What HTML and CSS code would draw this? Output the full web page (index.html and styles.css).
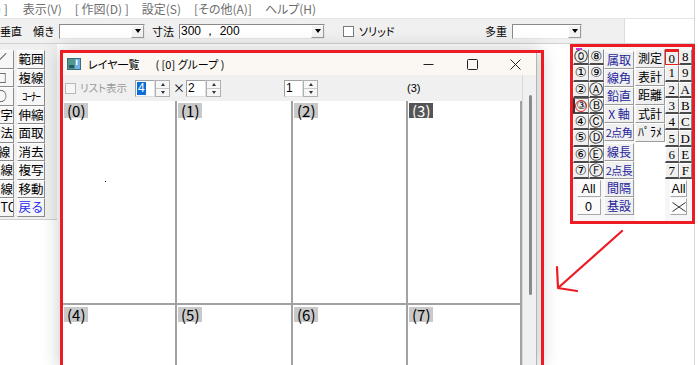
FILE: index.html
```html
<!DOCTYPE html>
<html lang="ja">
<head>
<meta charset="utf-8">
<title>レイヤ一覧</title>
<link rel="stylesheet" href="styles.css">
</head>
<body>
<div class="app">
  <div class="menubar">
    <span class="mi first">) ]</span>
    <span class="mi">表示(V)</span>
    <span class="mi">[ 作図(D) ]</span>
    <span class="mi">設定(S)</span>
    <span class="mi">[その他(A)]</span>
    <span class="mi">ヘルプ(H)</span>
  </div>
  <div class="toolbar">
    <div class="tbar">
      <span class="tl">垂直</span>
      <span class="tl l-kata">傾き</span>
      <span class="combo c-kata"><span class="cval"></span><span class="dd"><i></i></span></span>
      <span class="tl l-sun">寸法</span>
      <span class="combo c-sun"><span class="cval">300 ， 200</span><span class="dd"><i></i></span></span>
      <span class="chk"></span>
      <span class="tl l-sol">ソリッド</span>
      <span class="tl l-ta">多重</span>
      <span class="combo c-ta"><span class="cval"></span><span class="dd"><i></i></span></span>
    </div>
  </div>
  <div class="workspace">
    <div class="toolpanel">
      <div class="tcol c1">
        <span class="tbtn">／</span><span class="tbtn">□</span><span class="tbtn">○</span>
        <span class="tbtn">文字</span><span class="tbtn">寸法</span><span class="tbtn">2線</span>
        <span class="tbtn">連線</span><span class="tbtn">中線</span><span class="tbtn">AUTO</span>
      </div>
      <div class="tcol c2">
        <span class="tbtn">範囲</span><span class="tbtn">複線</span><span class="tbtn narrow">ｺｰﾅｰ</span>
        <span class="tbtn">伸縮</span><span class="tbtn">面取</span><span class="tbtn">消去</span>
        <span class="tbtn">複写</span><span class="tbtn">移動</span><span class="tbtn undo">戻る</span>
      </div>
    </div>
    <div class="canvas"></div>
  </div>
</div>

<div class="dialog">
  <div class="titlebar">
    <svg class="appicon" width="14" height="12" viewBox="0 0 14 12">
      <rect x="0" y="0" width="14" height="12" fill="#3c6e78"/>
      <rect x="1" y="1" width="7" height="10" fill="#4f9a8c"/>
      <rect x="8" y="1" width="5" height="10" fill="#6fb1e0"/>
      <rect x="9" y="2" width="1.5" height="5" fill="#ffffff"/>
      <rect x="2" y="7" width="5" height="3" fill="#2b5560"/>
    </svg>
    <span class="title">レイヤ一覧</span>
    <span class="title t2">( [0] グループ )</span>
    <div class="winctl">
      <span class="wbtn"><svg width="11" height="11" viewBox="0 0 11 11"><path d="M0.5 5.5H10.5" stroke="#222" stroke-width="1"/></svg></span>
      <span class="wbtn"><svg width="11" height="11" viewBox="0 0 11 11"><rect x="0.5" y="0.5" width="10" height="10" rx="1" fill="none" stroke="#222" stroke-width="1"/></svg></span>
      <span class="wbtn close"><svg width="11" height="11" viewBox="0 0 11 11"><path d="M0.5 0.5L10.5 10.5M10.5 0.5L0.5 10.5" stroke="#222" stroke-width="1"/></svg></span>
    </div>
  </div>
  <div class="dbody">
    <div class="dmain">
      <div class="dtools">
        <span class="dchk"></span>
        <span class="dlabel">リスト表示</span>
        <span class="spin s1"><span class="sval"><span class="sel">4</span></span><span class="sbtns"><span class="sb"><i class="up"></i></span><span class="sb"><i class="dn"></i></span></span></span>
        <span class="times">×</span>
        <span class="spin s2"><span class="sval">2</span><span class="sbtns"><span class="sb"><i class="up"></i></span><span class="sb"><i class="dn"></i></span></span></span>
        <span class="spin s3"><span class="sval">1</span><span class="sbtns"><span class="sb"><i class="up"></i></span><span class="sb"><i class="dn"></i></span></span></span>
        <span class="cur">(3)</span>
      </div>
      <div class="grid">
        <div class="cell top"><span class="lbl">(0)</span><span class="dot"></span></div>
        <div class="cell top"><span class="lbl">(1)</span></div>
        <div class="cell top"><span class="lbl">(2)</span></div>
        <div class="cell top"><span class="lbl on">(3)</span></div>
        <div class="cell"><span class="lbl">(4)</span></div>
        <div class="cell"><span class="lbl">(5)</span></div>
        <div class="cell"><span class="lbl">(6)</span></div>
        <div class="cell"><span class="lbl">(7)</span></div>
      </div>
    </div>
    <div class="vscroll"><div class="thumb"></div></div>
  </div>
</div>

<div class="palette">
  <div class="pcol ab">
    <div class="cgrid">
      <span class="cb first0"><i class="mag"></i>⓪</span><span class="cb">⑧</span>
      <span class="cb">①</span><span class="cb">⑨</span>
      <span class="cb">②</span><span class="cb">Ⓐ</span>
      <span class="cb pressed"><span class="ring">③</span></span><span class="cb">Ⓑ</span>
      <span class="cb">④</span><span class="cb">Ⓒ</span>
      <span class="cb">⑤</span><span class="cb">Ⓓ</span>
      <span class="cb">⑥</span><span class="cb">Ⓔ</span>
      <span class="cb">⑦</span><span class="cb">Ⓕ</span>
    </div>
    <span class="wbtn2">All</span>
    <span class="wbtn2">0</span>
  </div>
  <div class="pcol c">
    <span class="bb">属取</span><span class="bb">線角</span><span class="bb">鉛直</span><span class="bb">X 軸</span><span class="bb sm">2点角</span>
    <span class="bb gap">線長</span><span class="bb sm">2点長</span><span class="bb">間隔</span><span class="bb">基設</span>
  </div>
  <div class="pcol d">
    <span class="mb">測定</span><span class="mb">表計</span><span class="mb">距離</span><span class="mb">式計</span><span class="mb">ﾊﾟﾗﾒ</span>
    <span class="blank"></span>
  </div>
  <div class="pcol ef">
    <div class="sgrid">
      <span class="sq cur0">0</span><span class="sq">8</span>
      <span class="sq">1</span><span class="sq">9</span>
      <span class="sq">2</span><span class="sq">A</span>
      <span class="sq">3</span><span class="sq">B</span>
      <span class="sq">4</span><span class="sq">C</span>
      <span class="sq">5</span><span class="sq">D</span>
      <span class="sq">6</span><span class="sq">E</span>
      <span class="sq">7</span><span class="sq">F</span>
    </div>
    <span class="wbtn3">All</span>
    <span class="wbtn3"><svg width="14" height="10" viewBox="0 0 14 10"><path d="M0.5 0.5L7 5L0.5 9.5M13.5 0.5L7 5L13.5 9.5" fill="none" stroke="#333" stroke-width="1"/></svg></span>
  </div>
</div>

<div class="mark mark-dialog"></div>
<div class="mark mark-palette"></div>
<svg class="arrow" width="698" height="365" viewBox="0 0 698 365">
  <path d="M622 231L558 288M557 267L558 288L577 291" fill="none" stroke="#ed1c24" stroke-width="2.2" stroke-linecap="round" stroke-linejoin="round"/>
</svg>
</body>
</html>
```
FILE: styles.css
```css
* { box-sizing: border-box; margin: 0; padding: 0; }
html, body { width: 698px; height: 365px; overflow: hidden; background: #fff; }
body {
  position: relative;
  font-family: "Noto Sans CJK JP", "Noto Sans", sans-serif;
  font-size: 12px;
  color: #000;
  line-height: 1;
}

.app {
  width: 695px;
  height: 365px;
  border-right: 1px solid #d6d6d6;
  display: flex;
  flex-direction: column;
}

/* menu */
.menubar {
  height: 19px;
  display: flex;
  align-items: center;
  gap: 13px;
  color: #6e6e6e;
  font-size: 12px;
  font-feature-settings: "palt";
  white-space: nowrap;
  border-bottom: 1px solid #e4e4e4;
}
.menubar .first { margin-left: -3px; margin-right: 2px; }

/* toolbar */
.toolbar {
  height: 25px;
  display: flex;
  border-bottom: 1px solid #d2d2d2;
}
.tbar {
  width: 625px;
  background: #f0f0f0;
  border-right: 1px solid #dcdcdc;
  display: flex;
  align-items: center;
  font-size: 11px;
  white-space: nowrap;
}
.tl { display: inline-block; }
.l-kata { margin-left: 11px; }
.l-sun { margin-left: 7px; }
.l-sol { margin-left: 5px; width: 36px; font-feature-settings: "palt"; }
.l-ta { margin-left: 90px; }
.combo {
  height: 15px;
  margin-left: 4px;
  display: flex;
  background: #fff;
  border: 1px solid;
  border-color: #8a8a8a #e6e6e6 #e6e6e6 #8a8a8a;
}
.c-kata { width: 86px; }
.c-sun { width: 146px; margin-left: 5px; }
.c-ta { width: 70px; margin-left: 5px; }
.cval {
  flex: 1;
  font-family: "Liberation Sans", sans-serif;
  font-size: 12px;
  line-height: 13px;
  padding-left: 1px;
}
.dd {
  width: 13px;
  height: 13px;
  border: 1px solid;
  border-color: #fff #9a9a9a #9a9a9a #fff;
  background: #f3f3f3;
  display: flex;
  align-items: center;
  justify-content: center;
}
.dd i {
  width: 0; height: 0;
  border-left: 3.5px solid transparent;
  border-right: 3.5px solid transparent;
  border-top: 4px solid #000;
}
.chk {
  width: 11px;
  height: 11px;
  margin-left: 18px;
  background: #fff;
  border: 1px solid #7a7a7a;
}

/* workspace */
.workspace {
  flex: 1;
  display: flex;
  align-items: flex-start;
}
.toolpanel {
  width: 57px;
  height: 176px;
  background: #f0f0f0;
  border-bottom: 1px solid #cfcfcf;
  display: flex;
  gap: 3px;
  padding-top: 6px;
}
.tcol { display: flex; flex-direction: column; }
.tcol.c1 { margin-left: -13px; }
.c1 .tbtn { width: 27px; }
.tbtn {
  width: 28px;
  height: 18.5px;
  display: flex;
  align-items: center;
  justify-content: center;
  font-size: 12.5px;
  background: #f7f7f7;
  border: 1px solid;
  border-color: #ffffff #8c8c8c #8c8c8c #ffffff;
  white-space: nowrap;
  overflow: hidden;
}
.tbtn.narrow { font-size: 11px; letter-spacing: -1px; }
.tbtn.undo { color: #2a2af0; }
.canvas { flex: 1; }

/* dialog window */
.dialog {
  position: absolute;
  left: 63px;
  top: 53px;
  width: 474px;
  height: 312px;
  overflow: hidden;
  background: #f0f0f0;
  border-right: 1px solid #b4b4b4;
  box-shadow: 0 0 18px 3px rgba(0, 0, 0, 0.22);
  display: flex;
  flex-direction: column;
}
.titlebar {
  height: 22px;
  flex: none;
  background: #fbf7f2;
  display: flex;
  align-items: center;
  padding-left: 4px;
  font-size: 11px;
  font-feature-settings: "palt";
}
.appicon { margin-right: 7px; flex: none; }
.title.t2 { margin-left: 16px; }
.winctl { margin-left: auto; display: flex; height: 22px; }
.wbtn {
  width: 44px;
  height: 22px;
  display: flex;
  align-items: center;
  justify-content: center;
}
.wbtn.close { width: 42px; }

.dbody { flex: 1; display: flex; min-height: 0; }
.dmain { width: 459px; display: flex; flex-direction: column; }
.dtools {
  height: 26px;
  flex: none;
  display: flex;
  align-items: center;
  padding-left: 2px;
  white-space: nowrap;
}
.dchk {
  width: 11px;
  height: 11px;
  border: 1px solid #b8b8b8;
  background: #f6f6f6;
}
.dlabel {
  width: 52px;
  margin-left: 4px;
  color: #9a9a9a;
  font-size: 10.5px;
  font-feature-settings: "palt";
}
.spin { display: flex; height: 17px; margin-left: 3px; }
.s2 { margin-left: 4px; }
.s3 { margin-left: 63px; }
.s3 .sval { width: 19px; }
.sval {
  width: 20px;
  height: 17px;
  background: #fff;
  border: 1px solid;
  border-color: #a0a0a0 #dedede #dedede #a0a0a0;
  font-family: "Liberation Sans", sans-serif;
  font-size: 12px;
  line-height: 15px;
  padding-left: 1px;
}
.sel { background: #0a6fd8; color: #fff; padding: 0 1px; display: inline-block; line-height: 13px; }
.sbtns {
  width: 15px;
  height: 17px;
  display: flex;
  flex-direction: column;
  border: 1px solid #b0b0b0;
  background: #f6f6f6;
}
.sb { flex: 1; display: flex; align-items: center; justify-content: center; }
.sb + .sb { border-top: 1px solid #c8c8c8; }
.sb i { width: 0; height: 0; border-left: 2.5px solid transparent; border-right: 2.5px solid transparent; }
.sb i.up { border-bottom: 3px solid #333; }
.sb i.dn { border-top: 3px solid #333; }
.times { width: 9px; margin-left: 3px; font-size: 12px; }
.cur {
  margin-left: 89px;
  font-family: "Liberation Sans", sans-serif;
  font-size: 11px;
}

.grid {
  flex: 1;
  display: grid;
  grid-template-columns: 114px 116px 115px 114px;
  grid-template-rows: 204px 1fr;
  background: #fff;
}
.cell {
  position: relative;
  border-right: 2px solid #a2a2a2;
  padding: 2px 0 0 1px;
}
.cell.top { border-bottom: 2px solid #a2a2a2; }
.lbl {
  display: inline-block;
  height: 15px;
  padding: 0 3px;
  background: #c9c9c9;
  font-size: 15px;
  line-height: 15px;
}
.lbl.on { background: #555; color: #fff; }
.dot { position: absolute; left: 42px; top: 80px; width: 1px; height: 1px; background: #000; }

.vscroll { flex: 1; border-left: 1px solid #d8d8d8; padding-top: 20px; }
.thumb { width: 3px; height: 200px; margin-left: 6px; border-radius: 2px; background: #8a8a8a; }

/* floating palette */
.palette {
  position: absolute;
  left: 573px;
  top: 47px;
  width: 119px;
  height: 174px;
  background: #f6f6f6;
  display: flex;
}
.pcol { display: flex; flex-direction: column; }
.pcol.ab { width: 31px; padding-top: 2px; align-items: center; }
.cgrid, .sgrid {
  display: grid;
  grid-template-rows: repeat(8, 16.3px);
}
.cgrid { grid-template-columns: 15.5px 15.5px; }
.cb {
  position: relative;
  display: flex;
  align-items: center;
  justify-content: center;
  font-family: "DejaVu Sans", sans-serif;
  font-size: 13.5px;
  background: #f0f0f0;
  border-top: 1px solid #fff;
  border-left: 1px solid #fff;
  border-right: 1px solid #8a8a8a;
  border-bottom: 2px solid #4a4a4a;
}
.cb.pressed { border-left: 2px solid #333; border-top: 1px solid #777; }
.ring {
  display: flex;
  align-items: center;
  justify-content: center;
  width: 12px;
  height: 12px;
  border: 1px solid #e42020;
  border-radius: 50%;
  font-size: 11px;
}
.mag { position: absolute; left: 2px; top: -2px; width: 6px; height: 2px; background: #c33ad8; }
.wbtn2 {
  width: 24px;
  height: 17px;
  margin-top: 1px;
  display: flex;
  align-items: center;
  justify-content: center;
  font-family: "Liberation Sans", sans-serif;
  font-size: 12.5px;
  background: #fbfbfb;
  border: 1px solid;
  border-color: #fff #a8a8a8 #a8a8a8 #fff;
}
.pcol.c { width: 31px; padding-top: 4px; }
.bb, .mb {
  width: 30px;
  height: 18px;
  display: flex;
  align-items: center;
  justify-content: center;
  font-size: 12px;
  background: #f0f0f0;
  border: 1px solid;
  border-color: #fff #9c9c9c #9c9c9c #fff;
  white-space: nowrap;
}
.bb { color: #24249c; }
.bb.sm { font-size: 11px; letter-spacing: -0.6px; }
.bb.gap { margin-top: 2px; }
.pcol.d { width: 30px; padding-top: 2px; }
.mb { height: 18.5px; }
.blank { flex: 1; background: #fff; }
.pcol.ef { width: 27px; padding-top: 2px; align-items: center; }
.sgrid { grid-template-columns: 13.5px 13.5px; }
.sq {
  position: relative;
  display: flex;
  align-items: center;
  justify-content: center;
  font-family: "Liberation Serif", serif;
  font-size: 13px;
  background: #f0f0f0;
  border-top: 1px solid #fff;
  border-left: 1px solid #fff;
  border-right: 1px solid #8a8a8a;
  border-bottom: 2px solid #4a4a4a;
}
.sq.cur0 { border: 1.5px solid #e42020; border-top: 3px solid #e42020; }
.wbtn3 {
  width: 17px;
  height: 17px;
  margin-top: 1px;
  display: flex;
  align-items: center;
  justify-content: center;
  font-family: "Liberation Sans", sans-serif;
  font-size: 12.5px;
  background: #fbfbfb;
  border: 1px solid;
  border-color: #fff #a8a8a8 #a8a8a8 #fff;
}

/* red annotations */
.mark {
  position: absolute;
  border: 3px solid #ed1c24;
  pointer-events: none;
}
.mark-dialog { left: 60px; top: 50px; width: 484px; height: 315px; border-bottom: 0; }
.mark-palette { left: 570px; top: 44px; width: 125px; height: 180px; }
.arrow { position: absolute; left: 0; top: 0; pointer-events: none; }
```
